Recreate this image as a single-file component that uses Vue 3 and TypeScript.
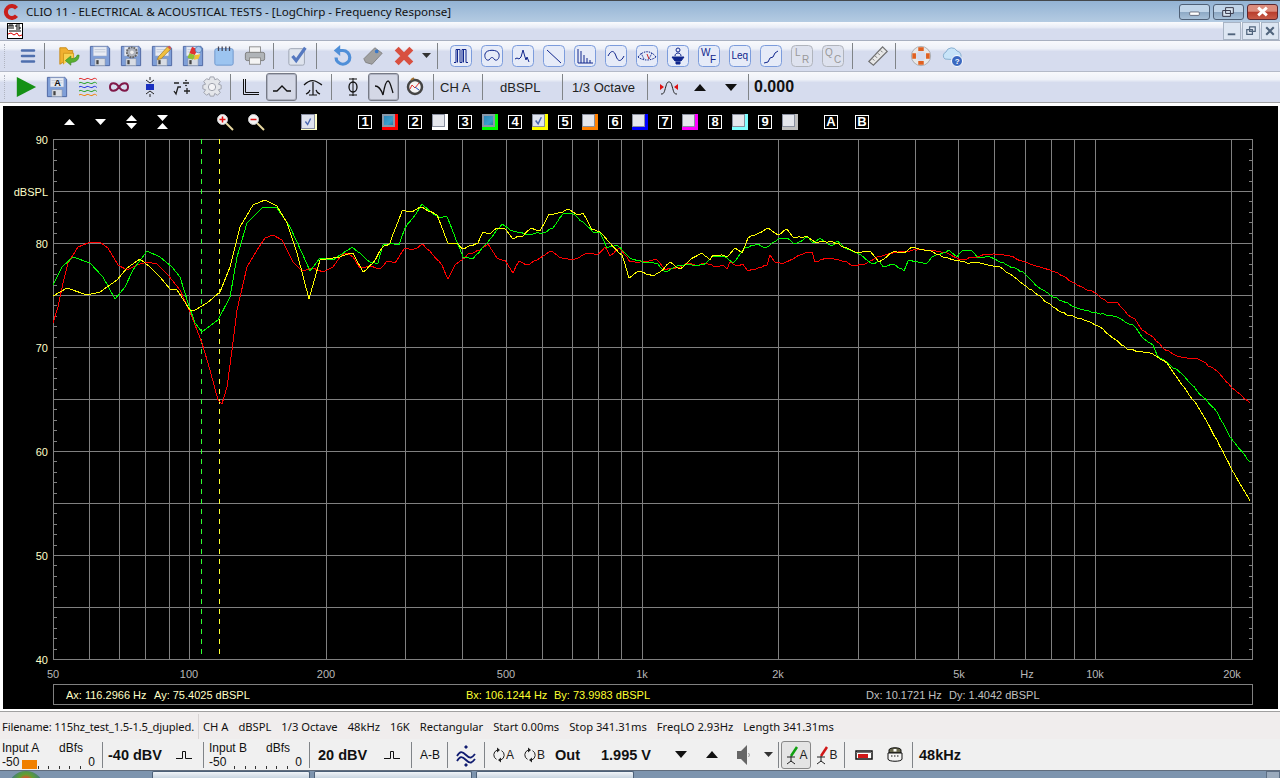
<script setup lang="ts">
type P = number[];
const redRaw: P = [53,323,58,307,63,283,68,263,78,247,88,243,100,242,108,248,118,265,127,270,137,265,147,262,157,264,168,275,180,290,190,312,202,343,210,370,218,400,222,404,227,387,232,350,237,310,247,267,257,250,265,238,273,235,282,240,293,262,302,271,313,268,323,272,333,267,340,257,347,253,353,257,360,268,370,266,380,269,387,261,395,263,405,248,412,250,423,244,433,255,442,265,448,279,455,265,462,260,468,254,480,250,488,244,497,258,505,260,513,273,519,261,527,265,540,258,550,251,562,258,570,260,578,258,587,253,597,255,605,247,610,256,620,248,630,262,640,262,657,260,665,270,680,267,687,263,697,266,703,263,717,267,723,265,727,269,730,262,737,266,743,264,748,271,758,268,767,265,770,255,775,262,782,264,793,259,805,253,812,252,815,262,830,258,847,262,853,266,863,265,877,257,893,253,920,249,947,253,960,260,973,257,987,254,1000,255,1010,256,1022,261,1040,267,1058,273,1072,282,1095,293,1107,302,1117,302,1128,315,1135,319,1142,330,1153,337,1163,348,1177,356,1200,360,1217,371,1232,388,1250,403];
const greenRaw: P = [53,285,62,267,73,257,90,263,103,277,115,299,125,287,133,270,147,251,160,257,172,267,180,277,188,303,195,323,202,332,218,320,230,297,237,257,247,223,263,207,277,208,290,227,302,253,310,271,320,258,333,260,340,255,352,247,360,253,370,262,378,263,383,245,390,244,399,245,405,228,413,218,422,204,432,213,440,218,447,217,455,237,463,257,473,259,487,243,502,224,510,230,527,234,543,233,553,228,563,214,573,214,583,222,593,232,600,233,607,248,617,245,630,258,643,262,657,263,665,272,680,265,703,265,712,257,723,256,733,263,745,248,758,244,765,248,778,239,787,238,795,244,808,237,813,243,820,238,832,246,837,241,845,248,857,253,872,264,880,262,883,267,893,264,904,271,908,261,918,262,927,263,932,257,943,253,949,250,957,257,962,251,972,251,977,257,990,257,1000,262,1023,272,1038,287,1050,295,1077,308,1097,313,1113,316,1133,325,1143,338,1153,345,1157,355,1170,365,1183,375,1203,397,1217,412,1230,437,1250,462];
const yellowRaw: P = [53,296,67,288,87,295,100,292,117,280,127,268,140,259,150,267,160,277,170,289,177,290,190,310,195,310,207,303,220,292,230,267,240,227,253,205,265,200,277,206,287,223,297,253,309,299,320,260,333,258,340,257,353,253,363,272,373,263,382,248,390,243,402,211,412,212,420,207,437,215,448,243,458,244,463,249,478,243,483,232,490,234,497,228,505,229,512,238,523,236,530,229,540,231,549,214,562,213,568,209,577,215,583,213,592,230,600,232,610,243,622,255,629,278,638,271,652,276,660,272,670,262,680,269,690,260,702,253,710,260,713,255,728,256,735,248,742,253,748,238,757,234,768,228,778,235,787,229,793,237,808,237,815,242,833,242,847,248,857,253,870,251,879,262,893,252,903,253,913,247,933,252,943,257,967,263,980,263,993,266,1000,267,1020,282,1038,295,1053,307,1067,315,1080,318,1100,327,1113,338,1127,349,1150,353,1167,363,1180,382,1197,405,1217,440,1232,470,1250,501];

function noisy(raw: P, seed: number): string {
  const out: string[] = [];
  for (let i = 0; i + 3 < raw.length; i += 2) {
    const x0 = raw[i], y0 = raw[i + 1], x1 = raw[i + 2], y1 = raw[i + 3];
    const n = x0 < 340 ? 1 : Math.max(1, Math.round((x1 - x0) / 3));
    for (let k = 0; k < n; k++) {
      const x = x0 + ((x1 - x0) * k) / n;
      const s = Math.sin((x + seed) * 12.9898) * 43758.5453;
      const j = x0 < 340 || k === 0 ? 0 : (s - Math.floor(s) - 0.5) * 1.6;
      out.push(`${x.toFixed(1)},${(y0 + ((y1 - y0) * k) / n + j).toFixed(1)}`);
    }
  }
  out.push(`${raw[raw.length - 2]},${raw[raw.length - 1]}`);
  return out.join(" ");
}
const traces = [
  { c: "#ff0000", p: noisy(redRaw, 1) },
  { c: "#00ff00", p: noisy(greenRaw, 7) },
  { c: "#ffff00", p: noisy(yellowRaw, 13) },
];

const decade = 452.7;
const fx = (f: number) => Math.round(53 + decade * Math.log10(f / 50));
const freqs = [60, 70, 80, 90, 100, 200, 300, 400, 500, 600, 700, 800, 900, 1000, 2000, 3000, 4000, 5000, 6000, 7000, 8000, 9000, 10000, 20000];
const vlines = freqs.map(fx);
const hlines = [139, 191, 243, 295, 347, 399, 451, 503, 555, 607, 659];
const ticks = Array.from({ length: 51 }, (_, i) => Math.round(139 + i * 10.4));
const ylabels = [
  { t: "90", y: 144 }, { t: "80", y: 248 }, { t: "70", y: 352 },
  { t: "60", y: 456 }, { t: "50", y: 560 }, { t: "40", y: 664 },
];
const xlabels = [
  { t: "50", x: 53 }, { t: "100", x: 189 }, { t: "200", x: 326 }, { t: "500", x: 506 },
  { t: "1k", x: 642 }, { t: "2k", x: 778 }, { t: "5k", x: 959 }, { t: "Hz", x: 1027 },
  { t: "10k", x: 1095 }, { t: "20k", x: 1232 },
];
const channels = [
  { n: "1", c: "#ff0000", k: "blue" },
  { n: "2", c: "#ffffff", k: "" },
  { n: "3", c: "#00ff00", k: "blue" },
  { n: "4", c: "#ffff00", k: "check" },
  { n: "5", c: "#ff8000", k: "" },
  { n: "6", c: "#0000ff", k: "" },
  { n: "7", c: "#ff00ff", k: "" },
  { n: "8", c: "#80ffff", k: "" },
  { n: "9", c: "#c0c0c0", k: "" },
];
const meterTicks = [0, 1, 2, 3, 4, 5];
</script>

<template>
  <div class="app">
    <svg class="defs" width="0" height="0">
      <symbol id="floppy" viewBox="0 0 24 24">
        <path d="M1.5 1.5h19l2 2v19h-21z" fill="#7f9fd8" stroke="#4a64a0" />
        <rect x="4.5" y="2" width="15" height="10" fill="#e8ecf4" stroke="#9aa8c8" stroke-width=".6" />
        <path d="M6 5h12M6 7.5h12" stroke="#c0c8d8" />
        <rect x="6.5" y="15" width="11" height="7.5" fill="#d8dce4" stroke="#8a94a8" stroke-width=".6" />
        <rect x="8" y="16.5" width="2.5" height="4.5" fill="#444" />
      </symbol>
    </svg>

    <header class="title">
      <svg class="logo" viewBox="0 0 16 16"><path d="M13.5 4.2A6 6 0 1 0 13.5 11.8" fill="none" stroke="#c8201c" stroke-width="4" /></svg>
      <span class="title-text">CLIO 11 - ELECTRICAL &amp; ACOUSTICAL TESTS - [LogChirp - Frequency Response]</span>
      <div class="winbtns">
        <button class="wb"><svg viewBox="0 0 30 15" width="30" height="15"><rect x="10" y="8" width="10" height="3.5" rx="1" fill="#fff" stroke="#445" stroke-width=".7" /></svg></button>
        <button class="wb"><svg viewBox="0 0 30 15" width="30" height="15"><path d="M12 3.5h8v6h-8zM9 6.5h8v6H9z" fill="#d8e4f0" stroke="#334" /></svg></button>
        <button class="wb close"><svg viewBox="0 0 30 15" width="30" height="15"><path d="M10.500 3.500l9 8M19.500 3.500l-9 8" stroke="#fff" stroke-width="3" /></svg></button>
      </div>
    </header>

    <div class="menubar">
      <svg class="ms" viewBox="0 0 16 16">
        <rect x=".5" y=".5" width="15" height="15" fill="#fff" stroke="#000" />
        <path d="M2 8h12" stroke="#000" />
        <path d="M2 2v4M4 2v4M6 2v4M2 2h4M9 2h4M9 2v2h4v2H9" stroke="#000" fill="none" />
        <path d="M1 11l3-1 3 2 3-2 2 3 3-1" stroke="#e00000" fill="none" />
      </svg>
      <div class="mdi">
        <button class="mb"><svg viewBox="0 0 17 17"><path d="M4 12h8" stroke="#50647c" stroke-width="2" /></svg></button>
        <button class="mb"><svg viewBox="0 0 17 17"><path d="M7 4h6v5H7zM4 7h6v5H4z" fill="#dfe7f2" stroke="#50647c" stroke-width="1.300" /></svg></button>
        <button class="mb"><svg viewBox="0 0 17 17"><path d="M4.500 4.500l8 8M12.500 4.500l-8 8" stroke="#50647c" stroke-width="2.200" /></svg></button>
      </div>
    </div>

    <div class="tb tb1">
      <span class="grip"></span>
      <span class="cell"><svg class="i22" viewBox="0 0 22 22"><path d="M5 5.500h12M5 11h12M5 16.500h12" stroke="#4f6fae" stroke-width="2.500" stroke-linecap="round" /></svg></span>
      <i class="sep s1"></i>
      <span class="cell"><svg class="i24" viewBox="0 0 24 24"><path d="M2 3h7l2 3h5v12H7L2 21z" fill="#f0b030" stroke="#c88a18" /><path d="M6 21V9h11v5" fill="#f8d050" stroke="#d0981c" /><path d="M23 11c0 6-4 8-9 8v3l-6-5 6-5v3c4 0 6-1 7-4z" fill="#58b030" stroke="#3a8820" stroke-width=".7" /></svg></span>
      <span class="cell"><svg class="i24"><use href="#floppy" /></svg></span>
      <span class="cell"><svg class="i24" viewBox="0 0 24 24"><use href="#floppy" width="24" height="24" /><circle cx="13" cy="8" r="5.500" fill="#b0b4bc" stroke="#666" stroke-dasharray="2 1" stroke-width="2" /><circle cx="13" cy="8" r="2" fill="#eee" /></svg></span>
      <span class="cell"><svg class="i24" viewBox="0 0 24 24"><use href="#floppy" width="24" height="24" /><path d="M8 13L18 2l3 3-10 10-4 1z" fill="#f0c040" stroke="#a07010" stroke-width=".7" /><path d="M18 2l3 3 1-2-2-2z" fill="#e05040" /></svg></span>
      <span class="cell"><svg class="i24" viewBox="0 0 24 24"><use href="#floppy" width="24" height="24" /><path d="M11 2l6 3-3 6-6-2z" fill="#e03030" /><path d="M8 9l6 2-2 5-6-2z" fill="#90c030" /><path d="M14 11l6-1-2 5-5 1z" fill="#f0c030" /><circle cx="18" cy="5" r="3.500" fill="#a8c8f0" stroke="#5078b0" stroke-width=".8" /></svg></span>
      <span class="cell"><svg class="i24" viewBox="0 0 24 24"><rect x="2" y="4" width="20" height="18" rx="2" fill="#9cc4f0" stroke="#6a94cc" /><path d="M6 1.500v5M10 1.500v5M14 1.500v5M18 1.500v5" stroke="#445" stroke-width="1.400" /></svg></span>
      <span class="cell"><svg class="i24" viewBox="0 0 24 24"><rect x="6" y="2" width="12" height="8" fill="#f4f4f4" stroke="#8a8a8a" /><rect x="1.500" y="8" width="21" height="9" rx="2" fill="#b0b4b8" stroke="#7a7a7a" /><rect x="6" y="14" width="12" height="7" fill="#f4f4f4" stroke="#8a8a8a" /></svg></span>
      <i class="sep s2"></i>
      <span class="cell"><svg class="i24" viewBox="0 0 24 24"><rect x="2" y="4" width="17" height="18" rx="2" fill="#dfe4ee" stroke="#9aa2b0" /><path d="M6 12l4 5L20 3" fill="none" stroke="#5578c0" stroke-width="3.500" /></svg></span>
      <i class="sep s3"></i>
      <span class="cell"><svg class="i24" viewBox="0 0 24 24"><path d="M8 6h5a7.500 7.500 0 1 1-7.500 7.500" fill="none" stroke="#4f8fd8" stroke-width="3.500" /><path d="M10 0v12L3 6z" fill="#4f8fd8" /></svg></span>
      <span class="cell"><svg class="i24" viewBox="0 0 24 24"><path d="M2 15L14 3l8 6-11 12-7-2z" fill="#a0a0a0" stroke="#808080" /><circle cx="16" cy="7" r="2" fill="#3a78c8" /></svg></span>
      <span class="cell"><svg class="i24" viewBox="0 0 24 24"><path d="M4 4l16 16M20 4L4 20" stroke="#d85040" stroke-width="6" /></svg></span>
      <span class="cell narrow"><svg width="9" height="6" viewBox="0 0 9 6"><path d="M0 0h9L4.500 5z" fill="#333" /></svg></span>
      <i class="sep s4"></i>
      <span class="cell"><svg class="bb" viewBox="0 0 22 22"><rect x=".5" y=".5" width="21" height="21" rx="4" /><path d="M4 17.500h2V4.500h4v13h2V4.500h4v13h2M7.500 4.500v13M13.500 4.500v13" /></svg></span>
      <span class="cell"><svg class="bb" viewBox="0 0 22 22"><rect x=".5" y=".5" width="21" height="21" rx="4" /><path d="M4 9c1-5 13-5 14 0 1 5-3 8-5 5-1-2-3-2-4 0-2 3-6 0-5-5z" /></svg></span>
      <span class="cell"><svg class="bb" viewBox="0 0 22 22"><rect x=".5" y=".5" width="21" height="21" rx="4" /><path d="M3 14l2-1 2 1 2-2 2-7 2 7 1 3 1-3 2 5" /></svg></span>
      <span class="cell"><svg class="bb" viewBox="0 0 22 22"><rect x=".5" y=".5" width="21" height="21" rx="4" /><path d="M4 5l14 13" /></svg></span>
      <span class="cell"><svg class="bb" viewBox="0 0 22 22"><rect x=".5" y=".5" width="21" height="21" rx="4" /><path d="M4 4v14h15M7 6v12M10 10v8M13 13v5M16 15v3" /></svg></span>
      <span class="cell"><svg class="bb" viewBox="0 0 22 22"><rect x=".5" y=".5" width="21" height="21" rx="4" /><path d="M3 11c3-6 6-6 8 0s5 6 8 0" /></svg></span>
      <span class="cell"><svg class="bb" viewBox="0 0 22 22"><rect x=".5" y=".5" width="21" height="21" rx="4" /><path d="M2 12c5-7 13-7 18 0" stroke-dasharray="1.500 1" /><path d="M2 12c5 4 13 4 18 0M5 8l3 6M16 8l-3 6" stroke-dasharray="1.500 1" /><path d="M11 9l2 5" class="red" /></svg></span>
      <span class="cell"><svg class="bb" viewBox="0 0 22 22"><rect x=".5" y=".5" width="21" height="21" rx="4" /><circle cx="11" cy="5" r="2" /><path d="M8 11c0-4 6-4 6 0" /><path d="M5 12h12l-3 4H8zM9 17h4v2H9z" class="fill" /></svg></span>
      <span class="cell"><svg class="bb" viewBox="0 0 22 22"><rect x=".5" y=".5" width="21" height="21" rx="4" /><text x="3" y="11" class="bt">W</text><text x="12" y="18" class="bt">F</text></svg></span>
      <span class="cell"><svg class="bb" viewBox="0 0 22 22"><rect x=".5" y=".5" width="21" height="21" rx="4" /><text x="2.500" y="14" class="bt">Leq</text></svg></span>
      <span class="cell"><svg class="bb" viewBox="0 0 22 22"><rect x=".5" y=".5" width="21" height="21" rx="4" /><path d="M4 18l4-1 2-4 3-1 2-4 3-2" /></svg></span>
      <span class="cell"><svg class="bb off" viewBox="0 0 22 22"><rect x=".5" y=".5" width="21" height="21" rx="4" /><text x="4" y="11" class="bt">L</text><text x="11" y="18" class="bt">R</text></svg></span>
      <span class="cell"><svg class="bb off" viewBox="0 0 22 22"><rect x=".5" y=".5" width="21" height="21" rx="4" /><text x="3" y="11" class="bt">Q</text><text x="12" y="18" class="bt">C</text></svg></span>
      <i class="sep s5"></i>
      <span class="cell"><svg class="i24" viewBox="0 0 24 24"><path d="M2 18L17 2l5 5L7 22z" fill="#e8e8e8" stroke="#707070" stroke-width="1.300" /><path d="M6 15l2 2M9 12l2 2M12 9l2 2M15 6l2 2" stroke="#707070" /></svg></span>
      <i class="sep s6"></i>
      <span class="cell"><svg class="i24" viewBox="0 0 24 24"><circle cx="12" cy="12" r="8" fill="none" stroke="#e8e8e8" stroke-width="5" /><circle cx="12" cy="12" r="10.500" fill="none" stroke="#909090" stroke-width=".7" /><path d="M9 2.500h6v4H9zM9 17.500h6v4H9zM2.500 9h4v6h-4zM17.500 9h4v6h-4z" fill="#e06020" /></svg></span>
      <span class="cell"><svg class="i24 wide" viewBox="0 0 24 24"><path d="M5 15a4 4 0 0 1 1-7 6 6 0 0 1 11-1 5 5 0 0 1 2 9z" fill="#c8e4f8" stroke="#8ab0d0" /><circle cx="17" cy="17" r="5.500" fill="#3a68c0" stroke="#fff" /><text x="14.800" y="20" class="q">?</text></svg></span>
    </div>

    <div class="tb tb2">
      <span class="grip"></span>
      <span class="cell"><svg class="i24" viewBox="0 0 24 24"><path d="M2 1l21 11L2 23z" fill="#159015" /></svg></span>
      <span class="cell"><svg class="i24" viewBox="0 0 24 24"><use href="#floppy" width="24" height="24" /><text x="9" y="10.500" class="sa">A</text></svg></span>
      <span class="cell"><svg class="i22" viewBox="0 0 22 22" fill="none"><path d="M2 3c3-2 4 2 7 0s4 2 7 0 3 1 4 0" stroke="#e02020" /><path d="M2 7c3-2 4 2 7 0s4 2 7 0 3 1 4 0" stroke="#20a020" /><path d="M2 11c3-2 4 2 7 0s4 2 7 0 3 1 4 0" stroke="#2030e0" /><path d="M2 15c3-2 4 2 7 0s4 2 7 0 3 1 4 0" stroke="#20a020" /><path d="M2 19c3-2 4 2 7 0s4 2 7 0 3 1 4 0" stroke="#f08000" /></svg></span>
      <span class="cell"><svg class="i22" viewBox="0 0 22 22"><path d="M11 11c-3-5-9-5-9 0s6 5 9 0 9-5 9 0-6 5-9 0z" fill="none" stroke="#801848" stroke-width="2" /></svg></span>
      <span class="cell"><svg class="i22" viewBox="0 0 22 22"><path d="M11 1v3M11 18v3M7 4l4 3 4-3M7 18l4-3 4 3" fill="none" stroke="#222" /><rect x="7" y="8" width="8" height="6" fill="#1a30c0" /></svg></span>
      <span class="cell"><svg class="i22" viewBox="0 0 22 22"><path d="M4 7h5M13 7h6M4 15l2 3 2-7h3M14 15h6M17 12v6" stroke="#222" fill="none" stroke-width="1.300" /><circle cx="16" cy="4.500" r=".8" /><circle cx="16" cy="9.500" r=".8" /></svg></span>
      <span class="cell"><svg class="i24" viewBox="0 0 24 24"><path d="M10 1h4l1 3 3-1 3 3-2 3 3 1v4l-3 1 2 3-3 3-3-2-1 3h-4l-1-3-3 2-3-3 2-3-3-1v-4l3-1-2-3 3-3 3 1z" fill="#e4e6ea" stroke="#9a9ea8" /><circle cx="12" cy="12" r="4" fill="#f4f4f6" stroke="#9a9ea8" /></svg></span>
      <i class="sep s7"></i>
      <span class="cell"><svg class="i22" viewBox="0 0 22 22"><path d="M3.500 3v15.500H19M5.500 3v13.500H19" fill="none" stroke="#111" /></svg></span>
      <span class="cell pressed"><svg class="i22" viewBox="0 0 22 22"><path d="M2 15h4l5-5 5 5h4" fill="none" stroke="#111" stroke-width="1.300" /></svg></span>
      <span class="cell"><svg class="i22" viewBox="0 0 22 22"><path d="M2 9c4-4 8-5 11-4 3 1 5 3 7 4M11 6v13M7 19h8M4 18c2-1 3-1 4-4M18 18c-2-1-3-1-4-4" fill="none" stroke="#111" stroke-width="1.200" /></svg></span>
      <i class="sep s8"></i>
      <span class="cell"><svg class="i22" viewBox="0 0 22 22"><ellipse cx="11" cy="11" rx="4" ry="5" fill="none" stroke="#111" stroke-width="1.300" /><path d="M7 3h8M7 19h8M11 2v18" stroke="#111" /></svg></span>
      <span class="cell pressed"><svg class="i22" viewBox="0 0 22 22"><path d="M2 10c3 0 6 3 8 9 1-6 3-14 5-14 2 0 3 5 5 12" fill="none" stroke="#111" stroke-width="1.300" /></svg></span>
      <span class="cell"><svg class="i22" viewBox="0 0 22 22"><circle cx="11" cy="11" r="7" fill="#f4f4f4" stroke="#444" stroke-width="2.500" /><path d="M6 13l2-4 3 3 4-5" fill="none" stroke="#e03030" /><path d="M11 11l4 3" stroke="#2050c0" /><path d="M7 4l3-2" stroke="#a07030" stroke-width="2" /></svg></span>
      <i class="sep s9"></i>
      <span class="tc tc-a">CH A</span>
      <i class="sep s0"></i>
      <span class="tc tc-b">dBSPL</span>
      <i class="sep s0"></i>
      <span class="tc tc-c">1/3 Octave</span>
      <i class="sep s10"></i>
      <span class="cell"><svg class="i22" viewBox="0 0 22 22"><path d="M3 18c3 0 3-1 5-8 1-4 2-4 3-4s2 0 3 4c2 7 2 8 5 8" fill="none" stroke="#222" /><path d="M2 8l4 3-4 3zM20 8l-4 3 4 3z" fill="#e01010" /></svg></span>
      <span class="cell"><svg width="12" height="7" viewBox="0 0 12 7"><path d="M0 7h12L6 0z" fill="#111" /></svg></span>
      <span class="cell"><svg width="12" height="7" viewBox="0 0 12 7"><path d="M0 0h12L6 7z" fill="#111" /></svg></span>
      <i class="sep s11"></i>
      <span class="readout">0.000</span>
    </div>

    <main class="chart">
      <div class="canvas">
        <div class="chartbar">
          <span class="arrow"><svg width="11" height="8" viewBox="0 0 11 8"><path d="M0 7h11L5.500 1z" fill="#fff" /></svg></span>
          <span class="arrow"><svg width="11" height="8" viewBox="0 0 11 8"><path d="M0 1h11L5.500 7z" fill="#fff" /></svg></span>
          <span class="arrow"><svg width="11" height="14" viewBox="0 0 11 14"><path d="M0 6h11L5.500 0zM0 8h11l-5.500 6z" fill="#fff" /></svg></span>
          <span class="arrow"><svg width="11" height="14" viewBox="0 0 11 14"><path d="M0 0h11L5.500 6zM0 14h11L5.500 8z" fill="#fff" /></svg></span>
          <span class="zoom-ic first"><svg width="18" height="18" viewBox="0 0 18 18"><path d="M9 9l8 8" stroke="#e8d8a0" stroke-width="2" /><circle cx="6.500" cy="6.500" r="5" fill="#f4f4f4" stroke="#ccc" /><path d="M3.500 6.500h6M6.500 3.500v6" stroke="#e01010" stroke-width="1.500" /></svg></span>
          <span class="zoom-ic"><svg width="18" height="18" viewBox="0 0 18 18"><path d="M9 9l8 8" stroke="#e8d8a0" stroke-width="2" /><circle cx="6.500" cy="6.500" r="5" fill="#f4f4f4" stroke="#ccc" /><path d="M3.500 6.500h6" stroke="#e01010" stroke-width="1.500" /></svg></span>
          <span class="swatch master"><svg viewBox="0 0 16 16"><path d="M4.500 8l3 4 4-8" fill="none" stroke="#4a68b0" stroke-width="1.800" /></svg></span>
          <div class="chan-row">
            <template v-for="ch in channels" :key="ch.n">
              <span class="num">{{ ch.n }}</span>
              <span class="swatch chan" :class="ch.k" :style="{ borderColor: ch.c }">
                <svg v-if="ch.k === 'check'" viewBox="0 0 16 16"><path d="M4.500 8l3 4 4-8" fill="none" stroke="#4a68b0" stroke-width="1.800" /></svg>
              </span>
            </template>
          </div>
          <span class="num letter">A</span>
          <span class="num letter b">B</span>
        </div>

        <svg class="plot" viewBox="3 136 1274 573" width="1274" height="573">
          <g class="grid">
            <line v-for="y in hlines" :key="'h' + y" x1="53" x2="1252.500" :y1="y + 0.5" :y2="y + 0.5" />
            <line v-for="x in vlines" :key="'v' + x" :x1="x + 0.5" :x2="x + 0.5" y1="139" y2="659.500" />
            <line x1="53.500" x2="53.500" y1="139" y2="660" />
            <line x1="1252.500" x2="1252.500" y1="139" y2="660" />
            <template v-for="y in ticks" :key="'t' + y">
              <line x1="53" x2="57" :y1="y + 0.5" :y2="y + 0.5" />
              <line x1="1249" x2="1252" :y1="y + 0.5" :y2="y + 0.5" />
            </template>
          </g>
          <line class="cur g" x1="201.500" x2="201.500" y1="139" y2="659" />
          <line class="cur y" x1="219.500" x2="219.500" y1="139" y2="659" />
          <polyline v-for="t in traces" :key="t.c" class="trace" :points="t.p" :stroke="t.c" />
          <text v-for="l in ylabels" :key="l.t" class="ylab" x="48" :y="l.y">{{ l.t }}</text>
          <text class="ylab" x="48" y="196">dBSPL</text>
          <text v-for="l in xlabels" :key="l.t" class="xlab" :x="l.x" y="678">{{ l.t }}</text>
          <rect class="infobox" x="53.500" y="684.500" width="1199" height="20" />
          <text class="info a" y="699"><tspan x="66">Ax: 116.2966 Hz</tspan><tspan x="154">Ay: 75.4025 dBSPL</tspan></text>
          <text class="info b" y="699"><tspan x="466">Bx: 106.1244 Hz</tspan><tspan x="554">By: 73.9983 dBSPL</tspan></text>
          <text class="info d" y="699"><tspan x="866">Dx: 10.1721 Hz</tspan><tspan x="949">Dy: 1.4042 dBSPL</tspan></text>
        </svg>
      </div>
    </main>

    <div class="status">
      <span class="fname">Filename: 115hz_test_1.5-1.5_djupled.</span>
      <span class="sitems">
        <span>CH A</span><span>dBSPL</span><span>1/3 Octave</span><span>48kHz</span><span>16K</span><span>Rectangular</span><span>Start 0.00ms</span><span>Stop 341.31ms</span><span>FreqLO 2.93Hz</span><span>Length 341.31ms</span>
      </span>
    </div>

    <div class="bottom">
      <div class="meter">
        <div class="m-top"><span>Input A</span><span>dBfs</span></div>
        <div class="m-bot">
          <span>-50</span>
          <span class="m-scale"><i class="m-fill"></i><i v-for="t in meterTicks" :key="t" class="m-tick"></i></span>
          <span>0</span>
        </div>
      </div>
      <i class="vsep"></i>
      <span class="big gain-a">-40 dBV</span>
      <span class="c-30"><svg width="18" height="12" viewBox="0 0 18 12"><path d="M1 9.500h6.500V2.500h3v7H17" fill="none" stroke="#111" /></svg></span>
      <i class="vsep v2"></i>
      <div class="meter">
        <div class="m-top"><span>Input B</span><span>dBfs</span></div>
        <div class="m-bot">
          <span>-50</span>
          <span class="m-scale"><i v-for="t in meterTicks" :key="t" class="m-tick"></i></span>
          <span>0</span>
        </div>
      </div>
      <i class="vsep"></i>
      <span class="big gain-b">20 dBV</span>
      <span class="c-30"><svg width="18" height="12" viewBox="0 0 18 12"><path d="M1 9.500h6.500V2.500h3v7H17" fill="none" stroke="#111" /></svg></span>
      <i class="vsep v8"></i>
      <span class="ab">A-B</span>
      <i class="vsep v3"></i>
      <span class="c-30"><svg width="20" height="24" viewBox="0 0 20 24"><path d="M1 13c3-5 5-5 9-1s6 3 9-1M1 18c3-5 5-5 9-1s6 3 9-1" fill="none" stroke="#101c70" stroke-width="1.800" /><path d="M10 2l-2 2 2 2 2-2zM10 20l-2 2 2 2 2-2z" fill="#101c70" /></svg></span>
      <i class="vsep v4"></i>
      <span class="c-30 cyc"><svg width="14" height="16" viewBox="0 0 14 16"><path d="M5 3.200A5 5 0 0 0 4.500 12.300M9 12.800A5 5 0 0 0 9.500 3.700" fill="none" stroke="#222" /><path d="M5 .5v5l3-2.500zM9 10.500v5l-3-2.500z" fill="#222" /></svg><em>A</em></span>
      <span class="c-30 cyc second"><svg width="14" height="16" viewBox="0 0 14 16"><path d="M5 3.200A5 5 0 0 0 4.500 12.300M9 12.800A5 5 0 0 0 9.500 3.700" fill="none" stroke="#222" /><path d="M5 .5v5l3-2.500zM9 10.500v5l-3-2.500z" fill="#222" /></svg><em>B</em></span>
      <span class="big out">Out</span>
      <span class="big volt">1.995 V</span>
      <span class="c-31"><svg width="12" height="7" viewBox="0 0 12 7"><path d="M0 0h12L6 7z" fill="#111" /></svg></span>
      <span class="c-31"><svg width="12" height="7" viewBox="0 0 12 7"><path d="M0 7h12L6 0z" fill="#111" /></svg></span>
      <span class="c-31"><svg width="14" height="20" viewBox="0 0 14 20"><path d="M1 6h4l6-6v20l-6-6H1z" fill="#666" /><path d="M12.500 8l1 2-1 2" fill="none" stroke="#999" /></svg></span>
      <span class="c-20"><svg width="9" height="5" viewBox="0 0 9 5"><path d="M0 0h9L4.500 5z" fill="#333" /></svg></span>
      <i class="vsep v5"></i>
      <span class="mic pressed2"><svg width="15" height="20" viewBox="0 0 15 20"><path d="M13 2L7 11" stroke="#10a010" stroke-width="2.500" /><path d="M7 11v6M3 19l4-3 4 3M3 12h8" fill="none" stroke="#222" /></svg><em>A</em></span>
      <span class="mic"><svg width="15" height="20" viewBox="0 0 15 20"><path d="M13 2L7 11" stroke="#d01818" stroke-width="2.500" /><path d="M7 11v6M3 19l4-3 4 3M3 12h8" fill="none" stroke="#222" /></svg><em>B</em></span>
      <i class="vsep v6"></i>
      <span class="c-31"><svg width="18" height="12" viewBox="0 0 18 12"><path d="M1 2h16v8H1z" fill="#fff" stroke="#111" stroke-width="1.500" /><path d="M3 5h10v4H3z" fill="#d01818" /><path d="M1 3.500h16" stroke="#777" /></svg></span>
      <span class="c-31"><svg width="16" height="15" viewBox="0 0 16 15"><path d="M2 6V3c0-3 12-3 12 0v3z" fill="#66664c" stroke="#111" /><path d="M1 6h14v6c0 3-14 3-14 0z" fill="#f4f4f4" stroke="#111" /><path d="M4 9h8" stroke="#111" stroke-dasharray="1.500 1.500" /><rect x="6.500" y="2" width="3" height="2.500" fill="#fff" /></svg></span>
      <i class="vsep v7"></i>
      <span class="big">48kHz</span>
    </div>

    <footer class="taskbar">
      <span class="orb"></span>
      <span class="task"></span>
      <span class="task"></span>
      <span class="task"></span>
      <span class="showd"></span>
    </footer>
  </div>
</template>

<style>
html, body { margin: 0; background: #f0f0f0; overflow: hidden; }
</style>

<style scoped>
.app { width: 1280px; height: 778px; display: flex; flex-direction: column; overflow: hidden; font-family: "Liberation Sans", Arial, sans-serif; color: #111; }
.defs { position: absolute; }
.title { height: 22px; box-sizing: border-box; border-top: 1px solid #44484c; background: linear-gradient(#93b3d4, #b4cbe2); display: flex; align-items: center; padding-left: 3px; flex: none; }
.logo { width: 16px; height: 16px; }
.title-text { margin-left: 7px; font-family: "Noto Sans", sans-serif; font-size: 11.600px; color: #111; white-space: nowrap; }
.winbtns { margin-left: auto; display: flex; gap: 3px; margin-right: 2px; }
.wb { width: 31px; height: 16px; padding: 0; box-sizing: border-box; border: 1px solid #4f6076; border-radius: 3px; background: linear-gradient(#c0d4e8 50%, #8ca8c4 50%, #a8c0d8); display: flex; align-items: center; justify-content: center; overflow: hidden; }
.wb.close { background: linear-gradient(#dc8c7c 45%, #b83c2c 50%, #c85c48); border-color: #5c2830; }
.menubar { height: 19px; flex: none; box-sizing: border-box; background: linear-gradient(#fafbfd, #e8ecf6 30%, #d6dcee 40%, #d6dcee); border-bottom: 1px solid #a8b0c0; display: flex; align-items: center; padding-left: 7px; }
.ms { width: 16px; height: 16px; }
.mdi { margin-left: auto; display: flex; gap: 1px; margin-right: 1px; align-self: flex-end; }
.mb { width: 18px; height: 18px; padding: 0; box-sizing: border-box; border: 1px solid #a8b4c4; background: #dde6f2; }
.mb svg { display: block; width: 16px; height: 16px; }
.tb { flex: none; display: flex; align-items: center; position: relative; background: linear-gradient(#f8f9fc, #eef1f8 25%, #d6dcee 35%, #d6dcee); }
.tb1 { height: 31px; padding-left: 12px; border-bottom: 1px solid #b4bac8; box-sizing: border-box; }
.tb2 { height: 31px; padding-left: 10px; border-bottom: 1px solid #a0a0a0; box-sizing: border-box; }
.grip { position: absolute; left: 4px; top: 3px; bottom: 3px; border-left: 1px dotted #b0b4c0; }
.cell { width: 31px; height: 30px; box-sizing: border-box; display: flex; align-items: center; justify-content: center; flex: none; }
.cell.narrow { width: 15px; }
.cell.pressed { background: #d4d8e6; border: 1px solid #767a86; border-radius: 3px; box-shadow: inset 0 0 0 1px #aeb2c0; height: 28px; }
.i22 { width: 22px; height: 22px; }
.i24 { width: 22px; height: 22px; }
.i24.wide { width: 24px; height: 24px; }
.sep { width: 1px; height: 26px; background: #808488; flex: none; }
.s1 { margin: 0 8px 0 1px; } .s2 { margin: 0 8px 0 3px; } .s3 { margin: 0 9px 0 3px; } .s4 { margin: 0 7px 0 3px; }
.s5 { margin: 0 9px 0 4px; } .s6 { margin: 0 9px 0 2px; } .s7 { margin: 0 4px 0 3px; } .s8 { margin: 0 5px 0 3px; }
.s9 { margin-left: 3px; } .s0 { margin: 0; } .s10 { margin-right: 5px; } .s11 { margin: 0 5px 0 2px; }
.bb { width: 22px; height: 22px; fill: none; stroke: #10268c; stroke-width: 1; }
.bb rect { fill: #e6ebf8; stroke: #7c9cdc; }
.bb .red { stroke: #d02020; }
.bb .fill { fill: #10268c; }
.bb.off { stroke: #a8a8a8; }
.bb.off rect { stroke: #b0b4bc; fill: #dee2ee; }
.bt { font: 10px "Liberation Sans", sans-serif; fill: #10268c; stroke: none; }
.bb.off .bt { fill: #999; }
.q { font: bold 8px "Liberation Sans", sans-serif; fill: #fff; }
.sa { font: bold 10px "Liberation Sans", sans-serif; fill: #111; }
.tc { font-size: 13px; color: #222; flex: none; box-sizing: border-box; white-space: nowrap; }
.tc-a { width: 48px; padding-left: 6px; }
.tc-b { width: 79px; padding-left: 17px; }
.tc-c { width: 84px; padding-left: 9px; }
.readout { font-weight: bold; font-size: 16px; color: #111; }
.chart { height: 609px; flex: none; box-sizing: border-box; background: #fff; padding: 3px 2px 2px 3px; border-bottom: 1px solid #a0a0a0; }
.canvas { background: #000; height: 603px; display: flex; flex-direction: column; }
.chartbar { height: 30px; flex: none; box-sizing: border-box; padding-top: 2px; display: flex; align-items: center; padding-left: 61px; }
.arrow { width: 31px; display: flex; justify-content: flex-start; }
.arrow svg { display: block; }
.zoom-ic { width: 31px; display: flex; }
.zoom-ic.first { margin-left: 28px; }
.swatch { width: 16px; height: 16px; box-sizing: border-box; display: block; background: linear-gradient(135deg, #b4b8c4, #e8eaf0); flex: none; }
.swatch svg { display: block; width: 100%; height: 100%; }
.master { border: 0; margin-left: 23px; background: #ffffc8; padding: 1px 3px 2px 1px; }
.master svg { background: #dfe3ee; outline: 1px solid #8a90a4; }
.chan-row { display: flex; align-items: center; margin-left: 41px; }
.chan { border: 3px solid; border-width: 0 3px 3px 0; margin: 0 10px; box-shadow: inset 0 0 0 1px #8a90a0; background: #e4e6ec; }
.chan.blue { background: linear-gradient(135deg, #2a7cb0, #3aa0cc 60%, #1c5c8c); box-shadow: inset 0 0 0 2px #8a98a8; }
.chan.check { background: #dfe3ee; }
.num { width: 14px; height: 14px; flex: none; box-sizing: border-box; border: 1px solid #fff; color: #fff; font: bold 13px/12px "Liberation Sans", sans-serif; text-align: center; }
.letter { margin-left: 16px; }
.letter.b { margin-left: 17px; }
.plot { display: block; flex: none; overflow: visible; }
.grid line { stroke: #808080; stroke-width: 1; shape-rendering: crispEdges; }
.cur { stroke-width: 1; stroke-dasharray: 5 5; shape-rendering: crispEdges; }
.cur.g { stroke: #30ff30; }
.cur.y { stroke: #ffff30; }
.trace { fill: none; stroke-width: 1; shape-rendering: crispEdges; }
.ylab { font: 11px "Liberation Sans", sans-serif; fill: #ffffc8; text-anchor: end; }
.xlab { font: 11px "Liberation Sans", sans-serif; fill: #b8b8b8; text-anchor: middle; }
.infobox { fill: #000; stroke: #808080; shape-rendering: crispEdges; }
.info { font: 11px "Liberation Sans", sans-serif; }
.info.a { fill: #ffffc8; }
.info.b { fill: #ffff30; }
.info.d { fill: #c0c0c0; }
.status { height: 27px; flex: none; background: #f0eded; display: flex; align-items: center; font-family: "Noto Sans", sans-serif; font-size: 11.200px; color: #111; box-sizing: border-box; white-space: nowrap; padding-top: 2px; }
.fname { width: 199px; padding-left: 2px; box-sizing: border-box; height: 25px; line-height: 25px; border-right: 1px solid #d8d4d4; letter-spacing: -0.15px; }
.sitems { display: flex; gap: 10px; margin-left: 4px; }
.bottom { height: 31px; flex: none; background: #f0f0f0; display: flex; align-items: center; }
.meter { width: 102px; flex: none; height: 31px; box-sizing: border-box; font-size: 12px; color: #111; display: flex; flex-direction: column; justify-content: space-between; padding: 2px 7px 0 2px; }
.m-top { display: flex; justify-content: space-between; padding-right: 12px; }
.m-bot { display: flex; align-items: flex-end; gap: 3px; padding-bottom: 1px; }
.m-scale { flex: 1; height: 9px; position: relative; display: flex; justify-content: space-around; align-items: flex-end; }
.m-fill { position: absolute; left: 0; bottom: 0; width: 15px; height: 9px; background: #f08000; }
.m-tick { width: 1px; height: 3px; background: #333; }
.vsep { width: 1px; height: 26px; background: #808488; flex: none; }
.big { font-weight: bold; font-size: 14.500px; white-space: nowrap; flex: none; }
.gain-a { margin-left: 5px; width: 61px; }
.gain-b { margin-left: 8px; width: 59px; }
.c-30 { width: 30px; display: flex; align-items: center; justify-content: center; flex: none; }
.c-31 { width: 31px; display: flex; align-items: center; justify-content: center; flex: none; }
.c-20 { width: 20px; display: flex; align-items: center; justify-content: center; flex: none; }
.v2 { margin-left: 4px; margin-right: 3px; }
.v8 { margin-left: 4px; margin-right: 8px; }
.ab { font-size: 12px; width: 27px; flex: none; }
.v3 { margin-right: 3px; }
.v4 { margin-left: 3px; margin-right: 3px; }
.cyc em, .mic em { font-style: normal; font-size: 12px; color: #222; }
.cyc svg { flex: none; }
.cyc.second { margin-left: 1px; }
.out { margin-left: 6px; width: 46px; }
.volt { width: 64px; }
.v5 { margin-right: 2px; }
.mic { width: 30px; height: 28px; box-sizing: border-box; display: flex; align-items: center; justify-content: center; flex: none; }
.mic.pressed2 { background: #e4e4e4; border: 1px solid #888; border-radius: 3px; }
.v6 { margin-left: 3px; margin-right: 3px; }
.v7 { margin-left: 2px; margin-right: 6px; }
.taskbar { height: 8px; flex: none; position: relative; background: #7d94ae; display: flex; gap: 4px; padding-left: 152px; align-items: flex-end; overflow: hidden; border-top: 1px solid #606c7c; box-sizing: border-box; }
.orb { position: absolute; left: 8px; top: 0; width: 36px; height: 36px; border-radius: 50%; background: radial-gradient(circle at 50% 30%, #e05030 0 12%, #60a030 25%, #3068a8 60%, #a8c0d8 100%); }
.task { width: 158px; height: 7px; background: linear-gradient(#f0f4f8, #c8d4e0); border: 1px solid #4c6078; border-bottom: 0; box-sizing: border-box; border-radius: 2px 2px 0 0; }
.showd { position: absolute; right: 0; top: 0; width: 14px; height: 8px; background: #9aaabc; border: 1px solid #5c6e84; box-sizing: border-box; }
</style>
